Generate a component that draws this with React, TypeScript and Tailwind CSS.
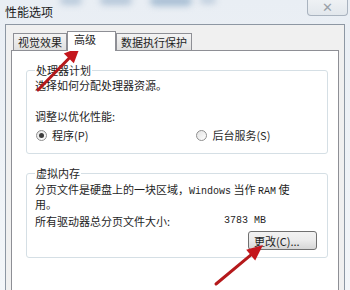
import React from 'react';

const cjk = { fontFamily: '"Noto Sans CJK SC", "Liberation Sans", sans-serif' };
const mono = { fontFamily: '"Liberation Mono", "Noto Sans CJK SC", monospace' };

const Radio = ({ checked, label }: { checked?: boolean; label: string }) => (
  <label className="flex items-center gap-[5px]">
    <span className="flex h-[11px] w-[11px] items-center justify-center rounded-full border border-[#8f8f8f] bg-gradient-to-br from-[#e2e2e2] to-white">
      {checked && <span className="h-[5px] w-[5px] rounded-full bg-[#3c3c3c]" />}
    </span>
    <span className={checked ? 'text-[#1c1c1c]' : 'text-[#2a2a2a]'}>{label}</span>
  </label>
);

const Tab = ({ label, active }: { label: string; active?: boolean }) => (
  <div
    className={
      active
        ? 'relative z-10 -mb-px flex h-[20px] w-[49px] items-start border border-b-0 border-[#8e8f95] bg-white pl-[6px] pt-[1px]'
        : 'flex h-[17px] items-center border border-b-0 border-[#8e8f95] bg-gradient-to-b from-[#f4f4f4] to-[#e0e0e0] px-[4px]'
    }
  >
    {label}
  </div>
);

// hand-drawn red callout arrow
const Arrow = ({ x1, y1, x2, y2 }: { x1: number; y1: number; x2: number; y2: number }) => {
  const a = Math.atan2(y2 - y1, x2 - x1);
  const len = 16;
  const w = 7;
  const bx = x2 - Math.cos(a) * len;
  const by = y2 - Math.sin(a) * len;
  const px = -Math.sin(a) * w;
  const py = Math.cos(a) * w;
  return (
    <g>
      <line x1={x1} y1={y1} x2={bx} y2={by} stroke="#b5191b" strokeWidth="3" strokeLinecap="round" />
      <polygon points={`${x2},${y2} ${bx + px},${by + py} ${bx - px},${by - py}`} fill="#c4161c" />
    </g>
  );
};

export default function App() {
  return (
    <div
      className="relative h-[290px] w-[350px] overflow-hidden bg-gradient-to-b from-[#e9eef4] to-[#f3f6f9] text-[11px] leading-[12px] text-[#1e1e1e]"
      style={cjk}
    >
      {/* aero glass smudges */}
      <div className="absolute left-[60px] top-[-4px] h-[9px] w-[22px] rounded-full bg-[#b9cadb] blur-[3px]" />
      <div className="absolute left-[100px] top-[-4px] h-[9px] w-[32px] rounded-full bg-[#b5c7d9] blur-[3px]" />
      <div className="absolute left-[150px] top-[-4px] h-[10px] w-[42px] rounded-full bg-[#a9bfd4] blur-[3px]" />
      <div className="absolute left-[200px] top-[-4px] h-[8px] w-[16px] rounded-full bg-[#c0cfde] blur-[3px]" />

      <div className="relative flex h-[24px] items-start justify-between">
        <span className="pl-[5px] pt-[6px] text-[12px] text-[#1a1a1a]">性能选项</span>
        <div className="mr-[2px] flex h-[16px] w-[41px] items-center justify-center rounded-b-[4px] border border-t-0 border-[#a9b3bf] bg-gradient-to-b from-[#eef1f4] to-[#e2e7ec]">
          <span className="text-[13px] font-bold leading-none text-[#9aa1a8]" style={{ fontFamily: '"DejaVu Sans", sans-serif' }}>
            ✕
          </span>
        </div>
      </div>

      <div className="ml-[5px] mr-[5px] h-[270px] border-l border-t border-r border-[#8d97a3] bg-[#f0f0f0] pl-[5px] pr-[5px] pt-[6px]">
        <div className="flex items-end pl-[2px]">
          <Tab label="视觉效果" />
          <Tab label="高级" active />
          <Tab label="数据执行保护" />
        </div>
        <div className="h-[260px] border border-[#8e8f95] bg-white pl-[14px] pr-[10px] pt-[13px]">
          <fieldset className="h-[90px] rounded-[3px] border border-[#d5dfe5] pl-[8px] pr-[8px]">
            <legend className="px-[1px] leading-[12px]">处理器计划</legend>
            <p className="mt-[3px]">选择如何分配处理器资源。</p>
            <p className="mt-[19px]">调整以优化性能:</p>
            <div className="mt-[7px] flex gap-[108px] pl-[1px]">
              <Radio checked label="程序(P)" />
              <Radio label="后台服务(S)" />
            </div>
          </fieldset>

          <fieldset className="mt-[13px] h-[91px] rounded-[3px] border border-[#d5dfe5] pl-[8px] pr-[8px]">
            <legend className="px-[1px] leading-[12px]">虚拟内存</legend>
            <p className="mt-[4px] leading-[12px]">
              <span className="block whitespace-nowrap">
                分页文件是硬盘上的一块区域，<span style={mono} className="text-[10px]">Windows</span> 当作{' '}
                <span style={mono} className="text-[10px]">RAM</span> 使
              </span>
              <span className="block">用。</span>
            </p>
            <div className="mt-[5px] flex">
              <span className="w-[189px]">所有驱动器总分页文件大小:</span>
              <span style={mono} className="text-[10px]">3783 MB</span>
            </div>
            <div className="mt-[4px] flex justify-end pr-[2px]">
              <button className="flex h-[19px] w-[69px] items-center rounded-[3px] border border-[#707070] bg-gradient-to-b from-[#f2f2f2] via-[#ebebeb] to-[#d6d6d6] pl-[5px] text-[11px] text-[#1e1e1e]">
                更改(C)...
              </button>
            </div>
          </fieldset>
        </div>
      </div>

      <svg className="pointer-events-none absolute inset-0" width="350" height="290">
        <Arrow x1={38} y1={90} x2={80} y2={47} />
        <Arrow x1={216} y1={284} x2={263} y2={245} />
      </svg>
    </div>
  );
}
